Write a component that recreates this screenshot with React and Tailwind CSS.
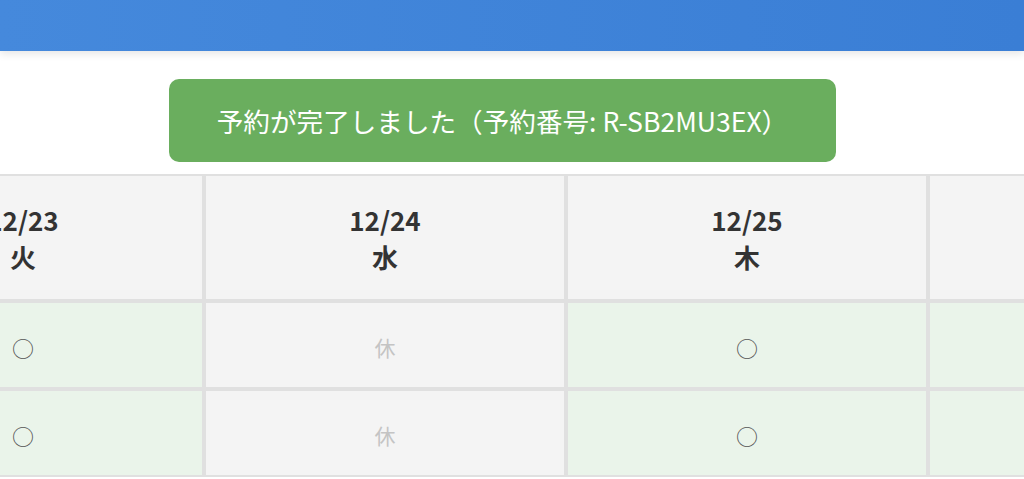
import React from 'react';

const days = [
  { date: '12/23', week: '火', closed: false },
  { date: '12/24', week: '水', closed: true },
  { date: '12/25', week: '木', closed: false },
  { date: '12/26', week: '金', closed: false },
];

const slots = [0, 1];

export default function App() {
  return (
    <div className="min-h-screen bg-white overflow-hidden font-['Noto_Sans_CJK_JP','Noto_Sans',sans-serif]">
      {/* Header bar */}
      <header className="relative z-10 h-[51px] bg-gradient-to-r from-[#4589dc] to-[#3a7ed5] shadow-[0_3px_8px_rgba(0,0,0,0.10)]" />

      {/* Completion message */}
      <div className="pt-[28px]">
        <div className="ml-[169px] w-[667px] h-[83px] rounded-[10px] bg-[#6aae5e] flex items-center justify-center text-white text-[26.6px]">
          予約が完了しました（予約番号: R-SB2MU3EX）
        </div>
      </div>

      {/* Calendar table */}
      <div className="mt-[12px] overflow-hidden">
        <div className="ml-[-158px] grid grid-cols-[repeat(4,362px)] w-max">
          {days.map((d) => (
            <div
              key={d.date}
              className="h-[127px] border-2 border-[#e0e0e0] bg-[#f4f4f4] flex flex-col items-center justify-center text-[#333] font-bold text-[26px] leading-[37px]"
            >
              <span>{d.date}</span>
              <span>{d.week}</span>
            </div>
          ))}
          {slots.map((s) =>
            days.map((d) => (
              <div
                key={d.date + s}
                className={`h-[88px] border-2 border-[#e0e0e0] flex items-center justify-center pt-[5px] ${
                  d.closed ? 'bg-[#f4f4f4] text-[#c4c4c4] text-[21px]' : 'bg-[#eaf4ea] text-[#555] text-[22px]'
                }`}
              >
                {d.closed ? '休' : '○'}
              </div>
            ))
          )}
        </div>
      </div>
    </div>
  );
}
